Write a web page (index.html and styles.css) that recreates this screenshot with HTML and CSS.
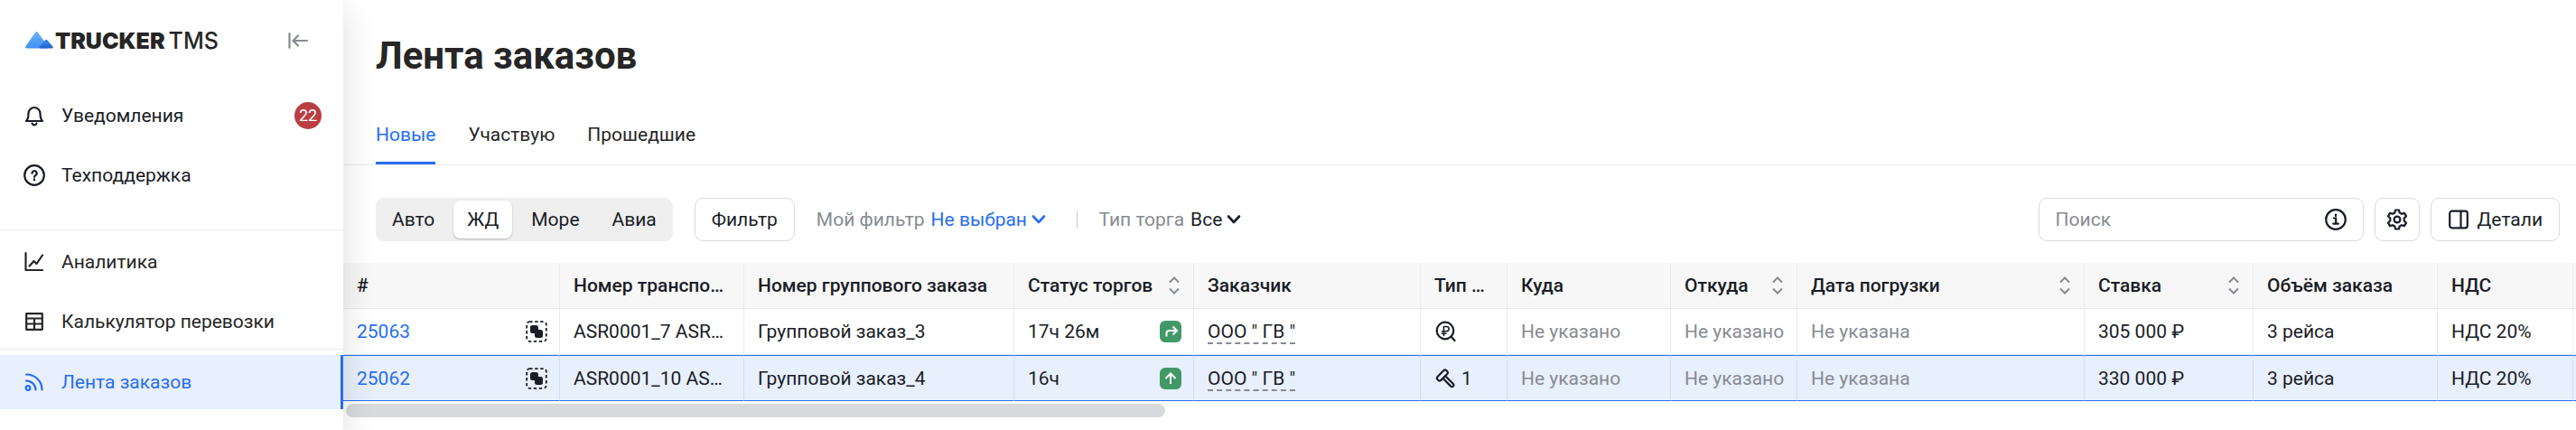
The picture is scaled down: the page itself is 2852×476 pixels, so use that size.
FILE: index.html
```html
<!DOCTYPE html>
<html lang="ru">
<head>
  <meta charset="UTF-8">
  <title>Лента заказов</title>
  <link rel="stylesheet" href="styles.css">
</head>
<body>
<svg class="sprite" aria-hidden="true">
  <symbol id="chevron" viewBox="0 0 18 18"><path d="M3 5.5l6 6.5 6-6.5"/></symbol>
  <symbol id="sort" viewBox="0 0 12 20"><path d="M1 6.500l5-5 5 5M1 13.500l5 5 5-5"/></symbol>
  <symbol id="group" viewBox="0 0 24 24">
    <rect x="1.200" y="1.200" width="21.600" height="21.600" rx="3" fill="none" stroke="currentColor" stroke-width="1.800" stroke-dasharray="3.400 2.600"/>
    <rect x="5" y="5" width="9" height="9" rx="2.500"/>
    <rect x="10" y="10" width="9" height="9" rx="2.500"/>
  </symbol>
</svg>
<div class="page">
  <aside class="sidebar">
    <div class="brand">
      <svg class="logo" viewBox="0 0 31 19">
        <defs>
          <linearGradient id="peak" x1="0" y1="0" x2="0" y2="1"><stop offset="0" stop-color="#6db0fa"/><stop offset="1" stop-color="#3f8ff7"/></linearGradient>
          <linearGradient id="hill" x1="0" y1="0" x2="0" y2="1"><stop offset="0" stop-color="#3d86ea"/><stop offset="1" stop-color="#2364cb"/></linearGradient>
        </defs>
        <path fill="url(#peak)" d="M11.200.8q1.300-1.400 2.600 0L25.500 16.500q.8 2-1 2H1.300Q-.5 18 .6 16z"/>
        <path fill="url(#hill)" d="M22.200 9.300q1.100-1 2.100 0L30.600 16.800q.8 1.700-1 1.700H16.500q-1.500-.4-.6-1.900z"/>
      </svg>
      <span class="brand-name">TRUCKER</span>
      <span class="brand-sub">TMS</span>
      <button class="collapse" type="button" aria-label="Свернуть меню">
        <svg class="icon" viewBox="0 0 24 24"><path d="M2.500 4v16M22 12H7M12 6.500L6.500 12l5.500 5.500"/></svg>
      </button>
    </div>
    <nav>
      <div class="nav-group">
        <a class="nav-item" href="#">
          <svg class="icon" viewBox="0 0 24 24"><path d="M3 18h18c-2-2-2.500-3.500-2.500-8.500a6.500 6.500 0 0 0-13 0C5.500 14.500 5 16 3 18zM9.500 20.500a2.600 2.600 0 0 0 5 0"/></svg>
          Уведомления
          <span class="count">22</span>
        </a>
        <a class="nav-item" href="#">
          <svg class="icon" viewBox="0 0 24 24"><circle cx="12" cy="12" r="10.800"/><path d="M9.500 9.800a2.600 2.600 0 1 1 3.800 2.300c-.9.500-1.300.9-1.300 1.900M12 16.300v1.200"/></svg>
          Техподдержка
        </a>
      </div>
      <div class="nav-group nav-tools">
        <a class="nav-item" href="#">
          <svg class="icon" viewBox="0 0 24 24"><path d="M2.500 2v19H21M6.500 16.500l5-5.500 3 3 6.500-9.500"/></svg>
          Аналитика
        </a>
        <a class="nav-item" href="#">
          <svg class="icon" viewBox="0 0 24 24"><path d="M3.200 3.200h17.600v17.600H3.200zM3 8.500h18M3 14.500h18M12 8.500V21"/></svg>
          Калькулятор перевозки
        </a>
      </div>
      <div class="nav-group nav-orders">
        <a class="nav-item active" href="#">
          <svg class="icon" viewBox="0 0 24 24"><circle cx="5" cy="18.500" r="2.400"/><path d="M3 3.500C13 3.500 20.500 11 20.500 20.500M3 10.500c6 0 10.500 4.500 10.500 10"/></svg>
          Лента заказов
        </a>
      </div>
    </nav>
  </aside>

  <main class="main">
    <h1 class="title">Лента заказов</h1>
    <div class="tabs">
      <a class="tab current" href="#">Новые</a>
      <a class="tab" href="#">Участвую</a>
      <a class="tab" href="#">Прошедшие</a>
    </div>

    <div class="toolbar">
      <div class="segments">
        <button class="segment" type="button">Авто</button>
        <button class="segment on" type="button">ЖД</button>
        <button class="segment" type="button">Море</button>
        <button class="segment" type="button">Авиа</button>
      </div>
      <button class="btn" type="button">Фильтр</button>
      <div class="picker blue">
        <label for="my-filter">Мой фильтр</label>
        <select id="my-filter"><option>Не выбран</option></select>
        <svg class="chevron"><use href="#chevron"/></svg>
      </div>
      <div class="picker split">
        <label for="trade-type">Тип торга</label>
        <select id="trade-type"><option>Все</option></select>
        <svg class="chevron"><use href="#chevron"/></svg>
      </div>
      <div class="actions">
        <div class="search">
          <input type="text" placeholder="Поиск" aria-label="Поиск">
          <svg class="icon" viewBox="0 0 24 24"><circle cx="12" cy="12" r="10.800"/><path d="M10 10.500h2.200v6M9.300 16.700h5.600M12 6.500v1.600"/></svg>
        </div>
        <button class="btn square" type="button" aria-label="Настройки">
          <svg class="icon" viewBox="0 0 24 24"><circle cx="12" cy="12" r="3.400"/><path d="M10 1.500h4l.7 3 2.300 1.300 3-.9 2 3.500-2.300 2.100v3l2.300 2.100-2 3.500-3-.9-2.300 1.300-.7 3h-4l-.7-3L7 18.200l-3 .9-2-3.500 2.300-2.100v-3L2 8.400l2-3.500 3 .9 2.300-1.300z"/></svg>
        </button>
        <button class="btn" type="button">
          <svg class="icon" viewBox="0 0 24 24"><rect x="2.200" y="2.700" width="19.600" height="18.600" rx="2.500"/><path d="M14.500 3v18"/></svg>
          Детали
        </button>
      </div>
    </div>

    <div class="table-wrap">
      <table class="orders">
        <colgroup>
          <col class="c-id"><col class="c-num"><col class="c-group"><col class="c-status"><col class="c-client"><col class="c-type"><col class="c-to"><col class="c-from"><col class="c-date"><col class="c-rate"><col class="c-num"><col class="c-vat"><col>
        </colgroup>
        <thead>
          <tr>
            <th>#</th>
            <th>Номер транспо…</th>
            <th>Номер группового заказа</th>
            <th><div class="cell">Статус торгов <button class="sort" type="button" aria-label="Сортировать"><svg><use href="#sort"/></svg></button></div></th>
            <th>Заказчик</th>
            <th>Тип …</th>
            <th>Куда</th>
            <th><div class="cell">Откуда <button class="sort" type="button" aria-label="Сортировать"><svg><use href="#sort"/></svg></button></div></th>
            <th><div class="cell">Дата погрузки <button class="sort" type="button" aria-label="Сортировать"><svg><use href="#sort"/></svg></button></div></th>
            <th><div class="cell">Ставка <button class="sort" type="button" aria-label="Сортировать"><svg><use href="#sort"/></svg></button></div></th>
            <th>Объём заказа</th>
            <th>НДС</th>
            <th class="rest"></th>
          </tr>
        </thead>
        <tbody>
          <tr>
            <td class="tight"><div class="cell"><a href="#">25063</a><svg class="group"><use href="#group"/></svg></div></td>
            <td>ASR0001_7 ASR…</td>
            <td>Групповой заказ_3</td>
            <td class="tight"><div class="cell">17ч 26м
              <svg class="state" viewBox="0 0 24 24"><path d="M7.500 17.500V14q0-3 3-3h8M14.500 6.500L19 11l-4.500 4.500"/></svg></div></td>
            <td><span class="client">ООО " ГВ "</span></td>
            <td><div class="type">
              <svg class="icon" viewBox="0 0 24 24"><circle cx="12" cy="11" r="9.300"/><path d="M18.500 17.500l4 4.500"/><path class="thin" d="M10.500 16.500v-10h3a2.600 2.600 0 0 1 0 5.200H8.500M8.500 14.200H13"/></svg></div></td>
            <td class="empty">Не указано</td>
            <td class="empty">Не указано</td>
            <td class="empty">Не указана</td>
            <td>305 000 ₽</td>
            <td>3 рейса</td>
            <td>НДС 20%</td>
            <td class="rest"></td>
          </tr>
          <tr class="selected">
            <td class="tight"><div class="cell"><a href="#">25062</a><svg class="group"><use href="#group"/></svg></div></td>
            <td>ASR0001_10 AS…</td>
            <td>Групповой заказ_4</td>
            <td class="tight"><div class="cell">16ч
              <svg class="state" viewBox="0 0 24 24"><path d="M12 18V7M6.500 12L12 6.500l5.500 5.500"/></svg></div></td>
            <td><span class="client">ООО " ГВ "</span></td>
            <td><div class="type">
              <svg class="icon" viewBox="0 0 24 24"><path d="M3.300 10.200l7.400-7.400q1.300-1 2.500.2l1.300 1.300q1 1.200 0 2.400l-7.400 7.400q-1.200 1-2.400 0l-1.400-1.400q-1.100-1.300 0-2.500zM9.500 11.800l8.800 8.800q1.500 1 2.700-.1 1-1.200 0-2.500l-9-9"/></svg>1</div></td>
            <td class="empty">Не указано</td>
            <td class="empty">Не указано</td>
            <td class="empty">Не указана</td>
            <td>330 000 ₽</td>
            <td>3 рейса</td>
            <td>НДС 20%</td>
            <td class="rest"></td>
          </tr>
        </tbody>
      </table>
    </div>
    <div class="scroll"><div class="thumb"></div></div>
  </main>
</div>
</body>
</html>
```
FILE: styles.css
```css
* {
  box-sizing: border-box;
}

body {
  margin: 0;
  font-family: Roboto, "Liberation Sans", sans-serif;
  font-size: 21px;
  line-height: 30px;
  color: #1a1d26;
  background: #fff;
}

a {
  color: #276ef1;
  text-decoration: none;
}

button, input, select {
  font: inherit;
  color: inherit;
}

button {
  border: 0;
  padding: 0;
  background: none;
  cursor: pointer;
}

.sprite {
  display: none;
}

.icon {
  flex: none;
  width: 24px;
  height: 24px;
  fill: none;
  stroke: currentColor;
  stroke-width: 2.2;
  stroke-linecap: round;
  stroke-linejoin: round;
}

.page {
  display: flex;
  min-height: 100vh;
}

/* sidebar */
.sidebar {
  position: relative;
  z-index: 1;
  flex: none;
  width: 380px;
  background: #fff;
  box-shadow: 0 12px 36px rgba(0, 0, 0, .14);
}

.brand {
  display: flex;
  align-items: center;
  height: 98px;
  padding: 0 38px 9px 28px;
  font-family: Inter, sans-serif;
  font-size: 25px;
  color: #262626;
}

.logo {
  width: 31px;
  height: 19px;
  margin-right: 2px;
}

.brand-name {
  font-weight: 900;
  margin-right: 4px;
}

.brand-sub {
  font-weight: 500;
}

.collapse {
  display: flex;
  margin-left: auto;
  color: #878b91;
}

.nav-group {
  display: flex;
  flex-direction: column;
  gap: 6px;
}

.nav-tools {
  margin-top: 30px;
  padding-top: 5px;
  border-top: 1px solid #ebebeb;
}

.nav-orders {
  padding-top: 6px;
  border-top: 1px solid #ebebeb;
}

.nav-item {
  display: flex;
  align-items: center;
  gap: 18px;
  height: 60px;
  padding: 0 24px 0 26px;
  color: #1a1d26;
}

.nav-tools .nav-item {
  color: #262626;
}

.nav-item.active {
  color: #276ef1;
  background: #e8effd;
  border-right: 3px solid #276ef1;
}

.count {
  width: 30px;
  margin-left: auto;
  border-radius: 15px;
  font-size: 18px;
  text-align: center;
  color: #fff;
  background: #bb3d41;
}

/* content */
.main {
  flex: 1;
  min-width: 0;
}

.title {
  margin: 0;
  padding: 38px 36px 30px;
  font-size: 42px;
  line-height: 48px;
  color: #262626;
}

.tabs {
  display: flex;
  gap: 36px;
  padding: 0 36px;
  border-bottom: 1px solid #ebebeb;
}

.tab {
  line-height: 66px;
  color: #262626;
}

.tab.current {
  color: #276ef1;
  box-shadow: inset 0 -3px #276ef1;
}

.toolbar {
  display: flex;
  align-items: center;
  gap: 24px;
  padding: 36px 18px 24px 36px;
}

.segments {
  display: flex;
  gap: 6px;
  height: 48px;
  padding: 3px;
  border-radius: 9px;
  background: #efefef;
}

.segment {
  padding: 0 15px;
  border-radius: 8px;
}

.segment.on {
  background: #fff;
  box-shadow: 0 1px 2px rgba(0, 0, 0, .25);
}

.btn {
  display: flex;
  align-items: center;
  justify-content: center;
  gap: 9px;
  height: 48px;
  padding: 0 18px;
  border: 1px solid #dadbde;
  border-radius: 9px;
  background: #fff;
}

.btn.square {
  width: 50px;
  padding: 0;
}

.picker {
  display: flex;
  align-items: center;
}

.picker label {
  margin-right: 7px;
  color: #878b91;
}

.picker select {
  padding: 0;
  border: 0;
  appearance: none;
  background: none;
}

.picker.blue {
  color: #276ef1;
}

.picker.split::before {
  content: "";
  width: 1px;
  height: 18px;
  margin: 0 24px 0 9px;
  background: #c4c6ca;
}

.chevron {
  width: 18px;
  height: 18px;
  margin-left: 3px;
  fill: none;
  stroke: currentColor;
  stroke-width: 2.6;
  stroke-linecap: round;
  stroke-linejoin: round;
}

.actions {
  display: flex;
  gap: 12px;
  margin-left: auto;
}

.search {
  display: flex;
  align-items: center;
  width: 360px;
  height: 48px;
  padding: 0 18px;
  border: 1px solid #dadbde;
  border-radius: 9px;
}

.search input {
  flex: 1;
  min-width: 0;
  padding: 0;
  border: 0;
  outline: 0;
  background: none;
}

.search input::placeholder {
  color: #878b91;
}

/* orders table */
.table-wrap {
  overflow: hidden;
}

.orders {
  width: 100%;
  table-layout: fixed;
  border-spacing: 0;
}

.c-id { width: 240px; }
.c-num { width: 204px; }
.c-group { width: 299px; }
.c-status { width: 199px; }
.c-client { width: 251px; }
.c-type { width: 96px; }
.c-to { width: 181px; }
.c-from { width: 140px; }
.c-date { width: 318px; }
.c-rate { width: 187px; }
.c-vat { width: 150px; }

.orders th,
.orders td {
  height: 51px;
  padding: 0 15px;
  border-right: 1px solid #ebebeb;
  border-bottom: 1px solid #ebebeb;
  text-align: left;
  white-space: nowrap;
}

.orders th {
  font-weight: 500;
  background: #f7f7f7;
}

.orders td.tight {
  padding-right: 13px;
}

.orders td.empty {
  color: #878b91;
}

.orders .rest {
  padding: 0;
  border-right: 0;
}

.orders .selected td {
  border-top: 1px solid #276ef1;
  border-bottom-color: #276ef1;
  border-right-color: #cfdffa;
  background: #e8effd;
}

.cell {
  display: flex;
  align-items: center;
  justify-content: space-between;
}

.type {
  display: flex;
  align-items: center;
  gap: 6px;
}

.thin {
  stroke-width: 1.6;
}

.sort {
  display: flex;
}

.sort svg {
  width: 12px;
  height: 20px;
  fill: none;
  stroke: #878b91;
  stroke-width: 2;
}

.group {
  width: 24px;
  height: 24px;
  color: #1a1d26;
  fill: currentColor;
}

.state {
  width: 24px;
  height: 24px;
  border-radius: 6px;
  background: #429867;
  fill: none;
  stroke: #fff;
  stroke-width: 2;
}

.client {
  display: inline-block;
  line-height: 24px;
  border-bottom: 2px dashed #878b91;
}

.scroll {
  padding: 3px;
}

.thumb {
  width: 36.8%;
  height: 15px;
  border-radius: 8px;
  background: #d9dade;
}
```
